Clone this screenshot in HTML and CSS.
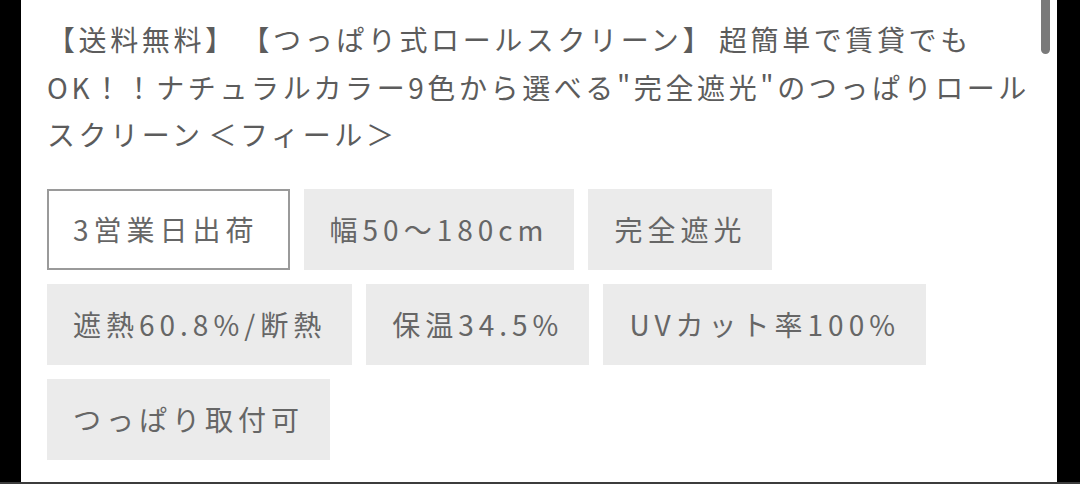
FILE: index.html
```html
<!DOCTYPE html>
<html lang="ja">
<head>
<meta charset="utf-8">
<link rel="stylesheet" href="styles.css">
</head>
<body>
<div class="frame">
  <div class="panel">
    <p class="title">【送料無料】 【つっぱり式ロールスクリーン】 超簡単で賃貸でもOK！！ナチュラルカラー9色から選べる"完全遮光"のつっぱりロールスクリーン ＜フィール＞</p>
    <ul class="tags">
      <li class="tag tag-outline">3営業日出荷</li>
      <li class="tag">幅50〜180cm</li>
      <li class="tag">完全遮光</li>
      <li class="tag">遮熱60.8%/断熱</li>
      <li class="tag">保温34.5%</li>
      <li class="tag">UVカット率100%</li>
      <li class="tag">つっぱり取付可</li>
    </ul>
    <div class="scrollbar"></div>
  </div>
</div>
</body>
</html>
```
FILE: styles.css
```css
html, body {
  margin: 0;
  padding: 0;
  background: #000;
}
body {
  width: 1080px;
  height: 484px;
  overflow: hidden;
  font-family: "Noto Sans CJK JP", "Noto Sans", sans-serif;
}
.frame {
  display: flex;
  flex-direction: column;
  height: 484px;
  padding-left: 21px;
  box-sizing: border-box;
  border-bottom: 2px solid #3c3c3c;
}
.panel {
  position: relative;
  width: 1036px;
  flex: 1;
  background: #fff;
  padding: 16px 10px 0 26px;
  box-sizing: border-box;
  overflow: hidden;
}
.title {
  margin: 0;
  font-size: 28px;
  line-height: 47.5px;
  letter-spacing: 3.6px;
  word-spacing: -5px;
  color: #5c5c5c;
  width: 995px;
}
.tags {
  list-style: none;
  margin: 30px 0 0;
  padding: 0;
  display: flex;
  flex-wrap: wrap;
  gap: 14px;
  width: 900px;
}
.tag {
  height: 81px;
  box-sizing: border-box;
  display: flex;
  align-items: center;
  padding: 0 26px 0 26px;
  background: #ebebeb;
  color: #666;
  font-size: 28px;
  letter-spacing: 5px;
}
.tag-outline {
  background: #fff;
  border: 2px solid #9a9a9a;
  padding: 0 29px 0 24px;
}
.scrollbar {
  position: absolute;
  top: -6px;
  right: 7px;
  width: 9px;
  height: 60px;
  border-radius: 5px;
  background: #7a7a7a;
}
```
